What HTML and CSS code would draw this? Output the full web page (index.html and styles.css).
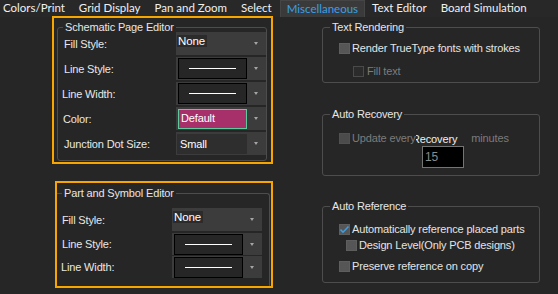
FILE: index.html
```html
<!DOCTYPE html>
<html>
<head>
<meta charset="utf-8">
<link rel="stylesheet" href="styles.css">
</head>
<body>
<div class="tabs">
  <span class="tab">Colors/Print</span>
  <span class="tab">Grid Display</span>
  <span class="tab">Pan and Zoom</span>
  <span class="tab">Select</span>
  <span class="tab active">Miscellaneous</span>
  <span class="tab">Text Editor</span>
  <span class="tab">Board Simulation</span>
</div>
<div class="content">
  <div class="left">
    <div class="hl hl-1">
      <fieldset class="grp grp-sch">
        <legend>Schematic Page Editor</legend>
        <div class="row"><span class="lbl">Fill Style:</span><div class="combo"><span class="v-none">None</span><i class="arrow"></i></div></div>
        <div class="row"><span class="lbl">Line Style:</span><div class="combo"><span class="v-line"><b></b></span><i class="arrow"></i></div></div>
        <div class="row"><span class="lbl shift">Line Width:</span><div class="combo"><span class="v-line"><b></b></span><i class="arrow"></i></div></div>
        <div class="row"><span class="lbl shift1">Color:</span><div class="combo"><span class="v-color">Default</span><i class="arrow"></i></div></div>
        <div class="row"><span class="lbl">Junction Dot Size:</span><div class="combo"><span class="v-dark">Small</span><i class="arrow"></i></div></div>
      </fieldset>
    </div>
    <div class="hl hl-2">
      <fieldset class="grp grp-part">
        <legend>Part and Symbol Editor</legend>
        <div class="row r23"><span class="lbl">Fill Style:</span><div class="combo"><span class="v-none">None</span><i class="arrow"></i></div></div>
        <div class="row r22"><span class="lbl">Line Style:</span><div class="combo"><span class="v-line"><b></b></span><i class="arrow"></i></div></div>
        <div class="row r22b"><span class="lbl shift1">Line Width:</span><div class="combo"><span class="v-line"><b></b></span><i class="arrow"></i></div></div>
      </fieldset>
    </div>
  </div>
  <div class="right">
    <fieldset class="grp rgrp g-text">
      <legend>Text Rendering</legend>
      <div class="chk-row"><span class="cb cb-on"></span><span>Render TrueType fonts with strokes</span></div>
      <div class="chk-row ind-14 mt7 dis"><span class="cb cb-off"></span><span class="t3">Fill text</span></div>
    </fieldset>
    <fieldset class="grp rgrp g-rec">
      <legend>Auto Recovery</legend>
      <div class="chk-row dis"><span class="cb cb-dis"></span><span class="upd">Update every</span><span class="recov">Recovery</span><span class="mins">minutes</span></div>
      <div class="input-row"><span class="num">15</span></div>
    </fieldset>
    <fieldset class="grp rgrp g-ref">
      <legend>Auto Reference</legend>
      <div class="chk-row"><span class="cb cb-on"><svg width="11" height="11" viewBox="0 0 11 11"><path d="M1.5 5.5 L4 8.2 L9.5 2.5" fill="none" stroke="#3a9fe8" stroke-width="1.6"/></svg></span><span>Automatically reference placed parts</span></div>
      <div class="chk-row ind-7"><span class="cb cb-on"></span><span>Design Level(Only PCB designs)</span></div>
      <div class="chk-row mt5"><span class="cb cb-on"></span><span>Preserve reference on copy</span></div>
    </fieldset>
  </div>
</div>
</body>
</html>
```
FILE: styles.css
```css
* { box-sizing: border-box; }
html, body { margin: 0; padding: 0; }
body {
  width: 558px;
  height: 294px;
  overflow: hidden;
  background: #262626;
  color: #e8e8e8;
  font-family: "Liberation Sans", Arial, sans-serif;
  font-size: 11px;
  letter-spacing: -0.15px;
}

/* tabs */
.tabs {
  display: flex;
  height: 17px;
  background: #282828;
  font-family: Lato, "Noto Sans", sans-serif;
  font-size: 11.5px;
  letter-spacing: 0;
  color: #f0f0f0;
}
.tab {
  padding: 0 7px;
  line-height: 16px;
  white-space: nowrap;
}
.tab:first-child { padding-left: 3px; }
.tab.active {
  background: #3a3a3a;
  border: 1px solid #454545;
  border-bottom: none;
  color: #3a9fe6;
  margin-left: 1px;
  padding: 0 6px;
  line-height: 15px;
  height: 17px;
}

.content { display: flex; }
.left { flex: 0 0 280px; }
.right { flex: 0 0 auto; margin-left: 42px; width: 218px; }

/* orange highlight boxes */
.hl { border: 2px solid #f7a600; }
.hl-1 { margin-left: 52px; margin-top: -1px; width: 221px; }
.hl-2 { margin-left: 55px; margin-top: 17px; width: 218px; }

/* group boxes */
.grp {
  border: 1px solid #4d4d4d;
  border-radius: 3px;
  margin: 0;
  min-width: 0;
}
.grp legend {
  line-height: 10px;
  padding: 0 2px;
  color: #e6e6e6;
  font-size: 11px;
  white-space: nowrap;
}
.grp-sch {
  margin: 4px 4px 1px 3px;
  padding: 0 0 5px 6px;
  display: flex;
  flex-direction: column;
  gap: 2px;
}
.grp-sch legend { margin-left: -1px; }
.grp-part {
  border-left: none;
  border-bottom: none;
  border-radius: 0 3px 0 0;
  margin: 5px 1px 0 0;
  padding: 10px 7px 8px 5px;
}

.row {
  display: flex;
  align-items: center;
  height: 23px;
}
.r22 { height: 22px; margin-top: 2px; }
.r22b { height: 22px; margin-top: 1px; }
.lbl { flex: 1; white-space: nowrap; font-size: 11px; }
.lbl.shift { margin-left: -2px; }
.lbl.shift1 { margin-left: -1px; }

/* combo boxes */
.combo {
  flex: 0 0 90px;
  height: 100%;
  background: #3c3c3c;
  display: flex;
  align-items: center;
  padding-left: 1px;
}
.arrow {
  margin-left: auto;
  margin-right: 8px;
  width: 0;
  height: 0;
  border-left: 2.5px solid transparent;
  border-right: 2.5px solid transparent;
  border-top: 3px solid #a5a5a5;
}
.v-none {
  align-self: flex-start;
  margin-top: 3px;
  height: 12px;
  line-height: 12px;
  padding: 0 2px 0 1px;
  background: #2b2b2b;
  color: #fff;
  font-size: 11.5px;
}
.v-line {
  margin-left: 1px;
  width: 69px;
  height: 21px;
  border: 1px solid #000;
  background: #262626;
  display: flex;
  align-items: center;
  justify-content: center;
}
.v-line b {
  display: block;
  width: 47px;
  height: 1px;
  background: #fff;
}
.v-color {
  margin-left: 1px;
  width: 69px;
  height: 20px;
  border: 1px solid #5fcb9c;
  background: #a8306a;
  color: #fff;
  line-height: 16px;
  padding-left: 2px;
  font-size: 11px;
}
.v-dark {
  width: 70px;
  height: 20px;
  background: #2e2e2e;
  color: #fff;
  line-height: 20px;
  padding-left: 3px;
  font-size: 11px;
}

/* right side groups */
.rgrp { width: 218px; padding: 0 6px 0 16px; }
.rgrp legend { margin-left: -9px; }
.g-text { margin-top: 5px; padding-top: 8px; padding-bottom: 3px; }
.g-rec { margin-top: 26px; padding-top: 11px; padding-bottom: 7px; }
.g-ref { margin-top: 25px; padding-top: 10px; padding-bottom: 8px; }

.chk-row {
  display: flex;
  align-items: center;
  height: 16px;
  white-space: nowrap;
  font-size: 11px;
  color: #e4e4e4;
}
.chk-row.dis { color: #7c7c7c; }
.ind-14 { padding-left: 14px; }
.ind-7 { padding-left: 7px; }
.mt7 { margin-top: 7px; }
.mt5 { margin-top: 5px; }
.t3 { margin-left: 1px; }

.cb {
  flex: 0 0 11px;
  width: 11px;
  height: 11px;
  margin-right: 2px;
  display: block;
}
.cb svg { display: block; margin: -1px; }
.cb-on { background: #565656; border: 1px solid #5e5e5e; }
.cb-off { background: #2b2b2b; border: 1px solid #4a4a4a; }
.cb-dis { background: #4b4b4b; border: 1px solid #505050; }

.upd {
  position: relative;
  z-index: 1;
  width: 64px;
  background: #262626;
}
.recov {
  margin-left: -4px;
  margin-top: 2px;
  color: #f0f0f0;
}
.mins { margin-left: 14px; }

.input-row { height: 22px; padding-left: 83px; }
.num {
  display: block;
  width: 42px;
  height: 22px;
  background: #000;
  border: 1px solid #747474;
  color: #8a8a8a;
  font-size: 12px;
  line-height: 20px;
  padding-left: 2px;
}
```
